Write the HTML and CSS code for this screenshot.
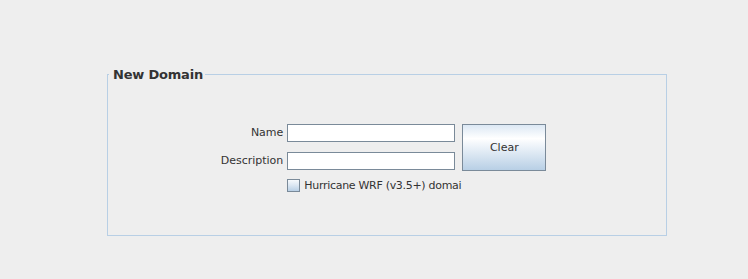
FILE: index.html
```html
<!DOCTYPE html>
<html>
<head>
<meta charset="utf-8">
<link rel="stylesheet" href="styles.css">
</head>
<body>
<div class="page">
  <fieldset class="panel">
    <legend class="panel-title">New Domain</legend>
    <div class="form">
      <label class="lbl" for="name">Name</label>
      <input class="field" id="name" type="text">
      <button class="btn" type="button">Clear</button>
      <label class="lbl" for="desc">Description</label>
      <input class="field" id="desc" type="text">
      <span class="empty"></span>
      <label class="check">
        <span class="box"></span>
        <span class="check-text">Hurricane WRF (v3.5+) domai</span>
      </label>
    </div>
  </fieldset>
</div>
</body>
</html>
```
FILE: styles.css
```css
html, body {
  margin: 0;
  padding: 0;
  background: #eeeeee;
}
body {
  width: 748px;
  height: 279px;
  overflow: hidden;
  font-family: "DejaVu Sans", sans-serif;
  font-size: 11px;
  color: #333333;
}
.page {
  padding: 67px 0 0 107px;
}
.panel {
  box-sizing: border-box;
  width: 560px;
  height: 169px;
  margin: 0;
  padding: 0;
  border: 1px solid #b8cfe5;
}
.panel-title {
  margin-left: 1px;
  padding: 0 2px 0 4px;
  font-size: 13px;
  font-weight: bold;
  line-height: 15px;
  letter-spacing: -0.2px;
  color: #333333;
}
.form {
  display: grid;
  grid-template-columns: auto 168px 84px;
  grid-template-rows: 18px 18px auto;
  column-gap: 4px;
  row-gap: 10px;
  justify-content: center;
  padding-top: 42px;
  padding-right: 10px;
}
.lbl {
  justify-self: end;
  align-self: center;
  line-height: 18px;
}
.field {
  box-sizing: border-box;
  width: 168px;
  height: 18px;
  margin: 0;
  border: 1px solid #7a8a99;
  background: #ffffff;
  outline: none;
}
.btn {
  grid-column: 3;
  grid-row: 1 / 3;
  box-sizing: border-box;
  align-self: start;
  width: 84px;
  height: 47px;
  margin: 0 0 0 3px;
  border: 1px solid #7a8a99;
  background: linear-gradient(to bottom, #dce8f4 0%, #ffffff 30%, #eaf1f8 50%, #b8cfe5 100%);
  font-family: "DejaVu Sans", sans-serif;
  font-size: 11px;
  color: #333333;
  padding: 0;
}
.check {
  grid-column: 2 / 4;
  grid-row: 3;
  display: flex;
  align-items: center;
  gap: 4px;
  margin-top: -3px;
  line-height: 17px;
}
.check-text {
  letter-spacing: -0.3px;
}
.box {
  box-sizing: border-box;
  width: 13px;
  height: 13px;
  border: 1px solid #7a8a99;
  background: linear-gradient(to bottom, #f6f9fc 0%, #dde8f3 45%, #b8cfe5 100%);
}
```
